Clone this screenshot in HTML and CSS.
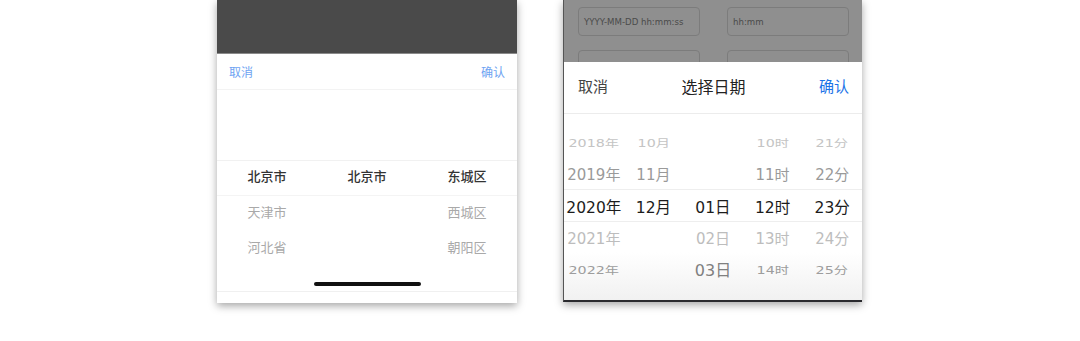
FILE: index.html
```html
<!DOCTYPE html>
<html lang="zh">
<head>
<meta charset="utf-8">
<link rel="stylesheet" href="styles.css">
</head>
<body>
<div class="stage">
  <div class="phone left">
    <div class="mask-dark"></div>
    <div class="sheet">
      <div class="bar small">
        <span class="btn blue-light">取消</span>
        <span class="btn blue-light">确认</span>
      </div>
      <div class="blank"></div>
      <div class="area-rows">
        <div class="arow sel"><span>北京市</span><span>北京市</span><span>东城区</span></div>
        <div class="arow"><span>天津市</span><span></span><span>西城区</span></div>
        <div class="arow"><span>河北省</span><span></span><span>朝阳区</span></div>
      </div>
      <div class="home"><div class="indicator"></div></div>
      <div class="foot"></div>
    </div>
  </div>

  <div class="phone right">
    <div class="mask-gray">
      <div class="inputs">
        <div class="inp">YYYY-MM-DD hh:mm:ss</div>
        <div class="inp">hh:mm</div>
        <div class="inp"></div>
        <div class="inp"></div>
      </div>
    </div>
    <div class="sheet2">
      <div class="bar big">
        <span class="btn dark">取消</span>
        <span class="title">选择日期</span>
        <span class="btn blue">确认</span>
      </div>
      <div class="picker">
        <div class="prow far top"><span>2018年</span><span>10月</span><span></span><span>10时</span><span>21分</span></div>
        <div class="prow near top"><span>2019年</span><span>11月</span><span></span><span>11时</span><span>22分</span></div>
        <div class="prow cur"><span>2020年</span><span>12月</span><span>01日</span><span>12时</span><span>23分</span></div>
        <div class="prow near bottom"><span>2021年</span><span></span><span>02日</span><span>13时</span><span>24分</span></div>
        <div class="prow far bottom"><span>2022年</span><span></span><span class="odd">03日</span><span>14时</span><span>25分</span></div>
      </div>
    </div>
  </div>
</div>
</body>
</html>
```

FILE: styles.css
```css
html, body {
  margin: 0;
  padding: 0;
  background: #ffffff;
}
body {
  width: 1080px;
  height: 341px;
  overflow: hidden;
  font-family: "Noto Sans CJK SC", "DejaVu Sans", sans-serif;
}
.stage {
  display: flex;
  justify-content: flex-start;
  align-items: flex-start;
  gap: 46px;
  padding-left: 217px;
}

/* ---------- left phone ---------- */
.phone {
  display: flex;
  flex-direction: column;
  background: #fff;
}
.phone.left {
  width: 300px;
  height: 303px;
  box-shadow: 0 3px 8px rgba(0, 0, 0, 0.35);
}
.mask-dark {
  height: 53px;
  background: #4a4a4a;
  border-bottom: 1px solid #8a8a8a;
}
.sheet {
  display: flex;
  flex-direction: column;
  flex: 1;
}
.bar {
  display: flex;
  justify-content: space-between;
  align-items: center;
}
.bar.small {
  height: 35px;
  padding: 0 12px;
  border-bottom: 1px solid #f3f3f3;
  font-size: 12px;
}
.blue-light { color: #6ea3f2; }
.blank {
  height: 70px;
  border-bottom: 1px solid #f1f1f1;
}
.area-rows {
  display: flex;
  flex-direction: column;
}
.arow {
  display: flex;
  height: 35px;
  box-sizing: border-box;
  padding-bottom: 5px;
  align-items: center;
  font-size: 13px;
  color: #a9a9a9;
}
.arow span {
  flex: 1;
  text-align: center;
}
.arow.sel {
  color: #333;
  font-weight: 500;
  border-bottom: 1px solid #f4f4f4;
}
.home {
  height: 26px;
  display: flex;
  justify-content: center;
  align-items: center;
  border-bottom: 1px solid #f0f0f0;
  padding-top: 10px;
  box-sizing: border-box;
}
.indicator {
  width: 107px;
  height: 4px;
  border-radius: 2px;
  background: #111;
}
.foot {
  flex: 1;
  background: #fff;
}

/* ---------- right phone ---------- */
.phone.right {
  width: 298px;
  height: 300px;
  border-left: 1px solid #555;
  border-bottom: 2px solid #2a2a2e;
  box-shadow: 0 3px 8px rgba(0, 0, 0, 0.35);
}
.mask-gray {
  height: 62px;
  background: #8f8f8f;
  overflow: hidden;
}
.inputs {
  display: grid;
  grid-template-columns: 122px 122px;
  column-gap: 27px;
  row-gap: 14px;
  padding: 7px 0 0 14px;
}
.inp {
  height: 29px;
  border: 1px solid #7c7c7c;
  border-radius: 4px;
  box-sizing: border-box;
  font-family: "DejaVu Sans", sans-serif;
  font-size: 8.6px;
  color: #4a4a4a;
  display: flex;
  align-items: center;
  padding-left: 5px;
}
.sheet2 {
  flex: 1;
  display: flex;
  flex-direction: column;
  background: linear-gradient(to bottom, #fff 0%, #fff 80%, #f1f1f1 100%);
}
.bar.big {
  height: 52px;
  box-sizing: border-box;
  padding: 0 13px 4px 14px;
  border-bottom: 1px solid #ececec;
  font-size: 15px;
}
.dark { color: #444; }
.blue { color: #1a73e8; }
.title {
  font-size: 16px;
  color: #222;
}
.picker {
  display: flex;
  flex-direction: column;
  padding-top: 12px;
  font-family: "DejaVu Sans", "Noto Sans CJK SC", sans-serif;
}
.prow {
  display: flex;
  height: 32px;
  align-items: center;
  font-size: 15px;
}
.prow span {
  flex: 1;
  text-align: center;
  white-space: nowrap;
}
.prow.near.top { height: 31px; }
.prow.cur {
  color: #1c1c1c;
  border-top: 1px solid #eeeeee;
  border-bottom: 1px solid #eeeeee;
  height: 31px;
  font-size: 15.5px;
}
.prow.near.top { color: #9a9a9a; }
.prow.near.bottom { color: #bdbdbd; height: 31px; }
.prow.far span {
  transform: scale(0.95, 0.7);
}
.prow.far.top { color: #c4c4c4; }
.prow.far.bottom { color: #9d9d9d; }
.prow.far span.odd {
  transform: none;
  font-size: 16px;
  color: #808080;
}
```
